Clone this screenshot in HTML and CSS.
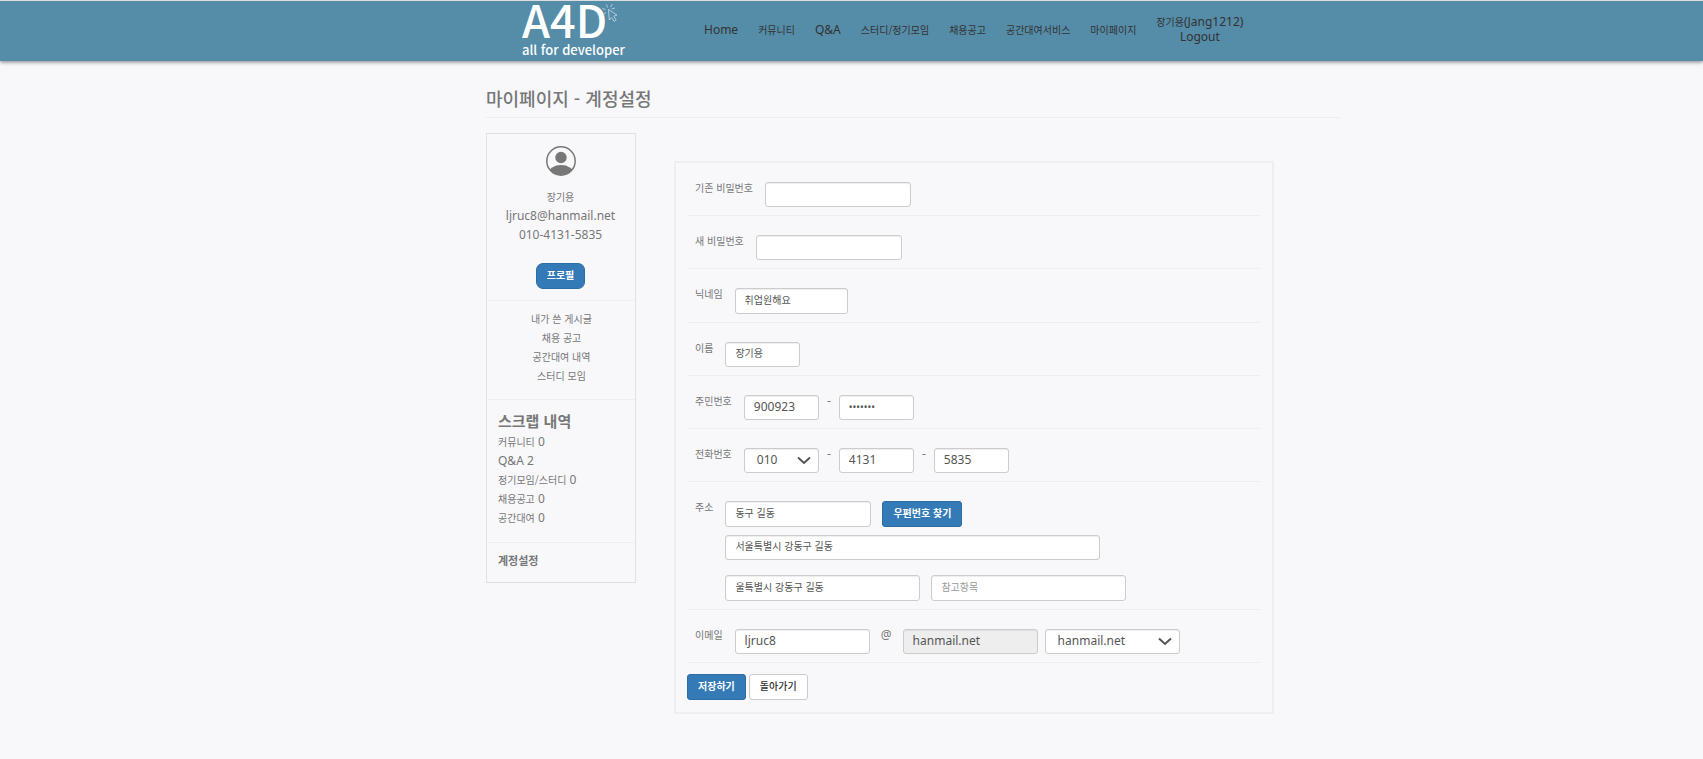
FILE: index.html
```html
<!DOCTYPE html>
<html lang="ko">
<head>
<meta charset="utf-8">
<title>A4D - 계정설정</title>
<link rel="stylesheet" href="styles.css">
</head>
<body>
<header class="site-header">
  <div class="header-inner">
    <a class="logo" href="#" aria-label="A4D all for developer">
      <svg width="108" height="60" viewBox="0 0 108 60">
        <text class="logo-name" x="0" y="37">A4D</text>
        <text class="logo-tag" x="0" y="54">all for developer</text>
        <g class="logo-cursor">
          <path d="M86.500 8.500 L95 14 L91.800 15.200 L94.200 19 L92 20.400 L89.700 16.600 L87.300 19 Z"/>
          <path d="M85.500 6.500 L84.500 3.500 M88.500 6 L90.500 3 M83.500 8.500 L80.500 7.500 M84 11.500 L81.500 13.500 M89.500 8 L93 7"/>
        </g>
      </svg>
    </a>
    <nav class="nav">
      <a href="#">Home</a>
      <a class="ko" href="#">커뮤니티</a>
      <a href="#">Q&amp;A</a>
      <a class="ko" href="#">스터디/정기모임</a>
      <a class="ko" href="#">채용공고</a>
      <a class="ko" href="#">공간대여서비스</a>
      <a class="ko" href="#">마이페이지</a>
      <div class="account">
        <span><span class="ko">장기용</span>(Jang1212)</span>
        <a href="#">Logout</a>
      </div>
    </nav>
  </div>
</header>

<main class="page">
  <h1 class="page-title">마이페이지 - 계정설정</h1>
  <div class="columns">
    <aside class="sidebar">
      <section class="side-block profile">
        <svg class="avatar" width="30" height="30" viewBox="0 0 30 30">
          <defs><clipPath id="avatar-ring"><circle cx="15" cy="15" r="14"/></clipPath></defs>
          <circle cx="15" cy="15" r="14.200" fill="none" stroke="#777" stroke-width="1.500"/>
          <circle cx="15" cy="11.500" r="5.700" fill="#777"/>
          <ellipse cx="15" cy="27.500" rx="12.500" ry="8.500" fill="#777" clip-path="url(#avatar-ring)"/>
        </svg>
        <span class="ko">장기용</span>
        <span>ljruc8@hanmail.net</span>
        <span>010-4131-5835</span>
        <button class="btn btn-primary btn-round" type="button">프로필</button>
      </section>
      <section class="side-block menu ko">
        <a href="#">내가 쓴 게시글</a>
        <a href="#">채용 공고</a>
        <a href="#">공간대여 내역</a>
        <a href="#">스터디 모임</a>
      </section>
      <section class="side-block scraps">
        <h2>스크랩 내역</h2>
        <a href="#"><span class="ko">커뮤니티</span> 0</a>
        <a href="#">Q&amp;A 2</a>
        <a href="#"><span class="ko">정기모임/스터디</span> 0</a>
        <a href="#"><span class="ko">채용공고</span> 0</a>
        <a href="#"><span class="ko">공간대여</span> 0</a>
      </section>
      <section class="side-block settings">
        <a href="#">계정설정</a>
      </section>
    </aside>

    <form class="account-form">
      <div class="row">
        <label for="old-pw">기존 비밀번호</label>
        <input class="field w-md" id="old-pw" type="password">
      </div>
      <div class="row">
        <label for="new-pw">새 비밀번호</label>
        <input class="field w-md" id="new-pw" type="password">
      </div>
      <div class="row">
        <label for="nick">닉네임</label>
        <input class="field tall ko w-nick" id="nick" type="text" value="취업원해요">
      </div>
      <div class="row">
        <label for="name">이름</label>
        <input class="field ko w-sm" id="name" type="text" value="장기용">
      </div>
      <div class="row">
        <label for="rrn1">주민번호</label>
        <input class="field w-sm" id="rrn1" type="text" value="900923">
        <span class="dash">-</span>
        <input class="field w-sm dots" type="password" value="1234567" aria-label="주민번호 뒷자리">
      </div>
      <div class="row">
        <label for="tel1">전화번호</label>
        <span class="select w-sm">
          <select class="field" id="tel1"><option>010</option></select>
          <svg width="14" height="9" viewBox="0 0 14 9"><path d="M1 1.500 L7 7 L13 1.500"/></svg>
        </span>
        <span class="dash">-</span>
        <input class="field w-sm" type="text" value="4131" aria-label="전화번호 가운데">
        <span class="dash">-</span>
        <input class="field w-sm" type="text" value="5835" aria-label="전화번호 끝">
      </div>
      <div class="row">
        <label for="zip">주소</label>
        <div class="address">
          <div class="line">
            <input class="field tall ko w-md" id="zip" type="text" value="동구 길동">
            <button class="btn btn-primary" type="button">우편번호 찾기</button>
          </div>
          <input class="field ko w-xl" type="text" value="서울특별시 강동구 길동" aria-label="주소">
          <div class="line line-detail">
            <input class="field tall ko w-lg" type="text" value="울특별시 강동구 길동" aria-label="상세주소">
            <input class="field tall ko w-lg" type="text" placeholder="참고항목" aria-label="참고항목">
          </div>
        </div>
      </div>
      <div class="row">
        <label for="mail">이메일</label>
        <input class="field w-mail" id="mail" type="text" value="ljruc8">
        <span class="at">@</span>
        <input class="field w-mail" type="text" value="hanmail.net" disabled aria-label="메일 도메인">
        <span class="select w-mail after">
          <select class="field" aria-label="메일 도메인 선택"><option>hanmail.net</option></select>
          <svg width="14" height="9" viewBox="0 0 14 9"><path d="M1 1.500 L7 7 L13 1.500"/></svg>
        </span>
      </div>
      <div class="actions">
        <button class="btn btn-primary" type="submit">저장하기</button>
        <button class="btn btn-default" type="button">돌아가기</button>
      </div>
    </form>
  </div>
</main>
</body>
</html>
```

FILE: styles.css
```css
* { box-sizing: border-box; }

body {
  margin: 0;
  background: #f8f8fb;
  color: #777;
  font: 12px/19px "Noto Sans", "Noto Sans CJK KR", sans-serif;
}

a { color: inherit; text-decoration: none; }

.ko { font-family: "Noto Sans CJK KR", sans-serif; font-size: 10px; }

/* Header */
.site-header {
  border-top: 1px solid #ddd;
  background: #558ca8;
  box-shadow: 0 1px 4px rgba(0, 0, 0, 0.5);
}

.header-inner {
  display: flex;
  max-width: 979px;
  height: 60px;
  margin: 0 auto;
  padding-left: 160px;
}

.logo { width: 182px; flex: none; }
.logo svg { display: block; overflow: visible; }
.logo text { fill: #fff; font-family: "Noto Sans CJK KR", sans-serif; font-weight: 500; }
.logo-name { font-size: 45px; }
.logo-tag { font-size: 13px; }
.logo-cursor { fill: none; stroke: #c5dae5; stroke-width: 0.8; }

.nav {
  display: flex;
  align-items: center;
  gap: 20px;
  padding-bottom: 4px;
  color: #333;
  white-space: nowrap;
}

.account {
  display: flex;
  flex-direction: column;
  align-items: center;
  line-height: 15px;
}

/* Page */
.page { max-width: 979px; margin: 0 auto; padding: 22px 0 40px 124px; }

.page-title {
  margin: 0 0 15px;
  padding-bottom: 4px;
  border-bottom: 1px solid #eee;
  font: 500 18px/30px "Noto Sans CJK KR", sans-serif;
}

.columns { display: flex; align-items: flex-start; gap: 38px; }

/* Sidebar */
.sidebar { width: 150px; flex: none; padding-left: 1px; border: 1px solid #dee2e6; }

.side-block { display: flex; flex-direction: column; padding: 8px 10px 14px; }
.side-block + .side-block { border-top: 1px solid #eee; }
.profile, .menu { align-items: center; }
.profile { padding: 12px 2px 11px 0; }
.avatar { margin-bottom: 11px; }
.profile .btn { margin-top: 19px; }
.scraps { padding-top: 10px; padding-bottom: 15px; }
.scraps h2 { margin: 0; font: 700 15px/22px "Noto Sans CJK KR", sans-serif; }
.settings { padding-bottom: 12px; font: 700 11px/19px "Noto Sans CJK KR", sans-serif; }

/* Form */
.account-form {
  width: 600px;
  margin-top: 28px;
  padding: 0 12px 0 11px;
  border: 2px solid #eee;
}

.row {
  display: flex;
  align-items: flex-start;
  padding: 19px 8px 8px;
  border-bottom: 1px solid #eee;
}

.row label {
  margin-top: -4px;
  margin-right: 12px;
  font: 10px/19px "Noto Sans CJK KR", sans-serif;
  white-space: nowrap;
}

.field {
  height: 25px;
  padding: 0 9px 2px;
  border: 1px solid #ccc;
  border-radius: 3px;
  background: #fff;
  color: #555;
  font-family: "Noto Sans", sans-serif;
  font-size: 12px;
  box-shadow: inset 0 1px 1px rgba(0, 0, 0, 0.07);
}

.field.ko { padding-bottom: 4px; font-family: "Noto Sans CJK KR", sans-serif; font-size: 10px; }
.field::placeholder { color: #999; }
.field:disabled { background: #eee; }
.tall { height: 26px; }
.dots { font-size: 10px; }

.w-sm { width: 75px; }
.w-nick { width: 113px; }
.w-mail { width: 135px; }
.w-md { width: 146px; }
.w-lg { width: 195px; }
.w-xl { width: 375px; }
.after { margin-left: 7px; }

.select { display: grid; align-items: center; }
.select > * { grid-area: 1 / 1; }
.select select { appearance: none; width: 100%; padding-left: 12px; }
.select svg {
  justify-self: end;
  margin-right: 8px;
  fill: none;
  stroke: #555;
  stroke-width: 2;
  pointer-events: none;
}

.dash, .at { width: 20px; margin-top: -4px; text-align: center; }
.at { width: 33px; }

.address { display: flex; flex-direction: column; gap: 8px; }
.line { display: flex; gap: 11px; }
.line-detail { margin-top: 7px; }

.btn {
  height: 26px;
  padding: 0 10px 4px;
  border: 1px solid #ccc;
  border-radius: 3px;
  background: #fff;
  color: #333;
  font: 500 10px/19px "Noto Sans CJK KR", sans-serif;
}

.btn-primary { border-color: #2e6da4; background: #337ab7; color: #fff; font-weight: 700; }
.btn-round { border-radius: 7px; }

.actions { display: flex; gap: 3px; padding: 11px 0 12px; }
```
